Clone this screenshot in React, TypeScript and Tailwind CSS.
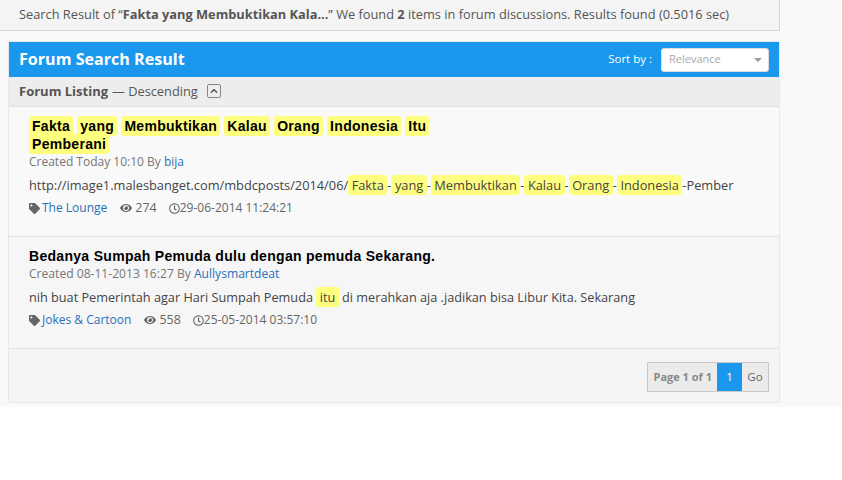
import React from "react";
import { FaTag, FaEye, FaRegClock, FaChevronUp } from "react-icons/fa";

const sans = "font-['Open_Sans',sans-serif]";

function Mark({ children }: { children: React.ReactNode }) {
  return <span className="bg-[#ffff7f] rounded-[3px] px-[3.5px] py-px">{children}</span>;
}

function TitleMark({ children }: { children: React.ReactNode }) {
  return <span className="bg-[#ffff7f] rounded-[3px] px-[3px] py-[2px]">{children}</span>;
}

function Meta({ tag, views, date }: { tag: string; views: string; date: string }) {
  return (
    <div className="flex items-center h-[18px] text-[12px] text-[#666]">
      <FaTag className="text-[11px] text-[#666] mr-[2px]" />
      <a className="text-[#2a70b8]">{tag}</a>
      <FaEye className="text-[12px] ml-[13px] mr-[3px]" />
      <span className="text-[12.5px]">{views}</span>
      <FaRegClock className="text-[11px] ml-[12px]" />
      <span>{date}</span>
    </div>
  );
}

export default function App() {
  return (
    <div className={`${sans} bg-white w-[842px] h-[480px] overflow-hidden`}>
      <div className="bg-[#f9f9f9] h-[407px]">
        <div className="w-[780px] h-[31px] bg-[#f4f4f4] border-b border-r border-[#d6d6d6] pl-[19px] pt-[5px] text-[12.8px] leading-[18px] text-[#555]">
          Search Result of “<b>Fakta yang Membuktikan Kala...</b>” We found <b>2</b> items in forum discussions. Results found (0.5016 sec)
        </div>

        <div className="ml-[8px] mt-[10px] w-[772px] border border-[#e8e8e8]">
          <div className="h-[35px] bg-[#1998ed] flex items-center justify-between pl-[10px] pr-[10px] text-white">
            <h1 className="text-[16.1px] font-bold">Forum Search Result</h1>
            <div className="flex items-center gap-[9px]">
              <span className="text-[11.5px] -mt-[2px]">Sort by :</span>
              <div className="w-[108px] h-[24px] bg-white border border-[#ddd] rounded-[3px] flex items-center justify-between pl-[7px] pr-[6px] text-[11px] text-[#aaa]">
                Relevance
                <span className="w-0 h-0 border-x-[4px] border-x-transparent border-t-[4px] border-t-[#999]" />
              </div>
            </div>
          </div>

          <div className="h-[30px] bg-[#ededed] border-b border-[#e0e0e0] flex items-center pl-[10px] pt-px text-[13px] text-[#555]">
            <b>Forum Listing</b>
            <span className="ml-[4px] text-[12.8px]">— Descending</span>
            <span className="ml-[9px] -mt-[3px] w-[14px] h-[14px] border border-[#888] rounded-[2px] bg-[#eee] flex items-center justify-center">
              <FaChevronUp className="text-[8px] text-[#444]" />
            </span>
          </div>

          <div className="h-[130px] bg-[#f9f9f9] border-b border-[#e2e2e2] pl-[20px] pt-[10px]">
            <h2 className="w-[410px] font-['Liberation_Sans',sans-serif] font-bold text-[14px] leading-[18px] tracking-[0.3px] text-black">
              <TitleMark>Fakta</TitleMark> <TitleMark>yang</TitleMark> <TitleMark>Membuktikan</TitleMark> <TitleMark>Kalau</TitleMark> <TitleMark>Orang</TitleMark> <TitleMark>Indonesia</TitleMark> <TitleMark>Itu</TitleMark> <TitleMark>Pemberani</TitleMark>
            </h2>
            <div className="mt-px text-[12px] leading-[16px] text-[#777]">
              Created Today 10:10 By <a className="text-[#2a70b8]">bija</a>
            </div>
            <div className="mt-[6px] text-[12.8px] leading-[18px] text-[#444] whitespace-nowrap">
              http://image1.malesbanget.com/mbdcposts/2014/06/<Mark>Fakta</Mark>-<Mark>yang</Mark>-<Mark>Membuktikan</Mark>-<Mark>Kalau</Mark>-<Mark>Orang</Mark>-<Mark>Indonesia</Mark>-Pember
            </div>
            <div className="mt-[5px]">
              <Meta tag="The Lounge" views="274" date="29-06-2014 11:24:21" />
            </div>
          </div>

          <div className="h-[112px] bg-[#f6f6f6] border-b border-[#e2e2e2] pl-[20px] pt-[10px]">
            <h2 className="font-['Liberation_Sans',sans-serif] font-bold text-[14px] leading-[18px] tracking-[0.3px] text-black">
              Bedanya Sumpah Pemuda dulu dengan pemuda Sekarang.
            </h2>
            <div className="mt-px text-[12.1px] leading-[16px] text-[#777]">
              Created 08-11-2013 16:27 By <a className="text-[#2a70b8]">Aullysmartdeat</a>
            </div>
            <div className="mt-[6px] text-[12.7px] leading-[18px] text-[#444] whitespace-nowrap">
              nih buat Pemerintah agar Hari Sumpah Pemuda <Mark>itu</Mark> di merahkan aja .jadikan bisa Libur Kita. Sekarang
            </div>
            <div className="mt-[5px]">
              <Meta tag="Jokes & Cartoon" views="558" date="25-05-2014 03:57:10" />
            </div>
          </div>

          <div className="h-[53px] bg-[#f5f5f5] flex items-center justify-end pr-[10px] pt-[3px]">
            <div className="h-[30px] flex border border-[#c8c8c8] bg-[#ebebeb] text-[11.5px] leading-[28px]">
              <span className="pl-[6px] pr-[5px] text-[#888] font-bold text-[11px]">Page 1 of 1</span>
              <span className="w-[25px] bg-[#1998ed] text-white text-center">1</span>
              <span className="w-[26px] text-[#666] text-center">Go</span>
            </div>
          </div>
        </div>
      </div>
    </div>
  );
}
